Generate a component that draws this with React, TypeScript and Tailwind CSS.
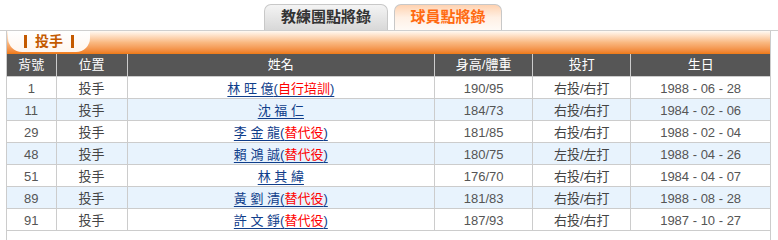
const font = "font-['Liberation_Sans','Noto_Sans_CJK_TC',sans-serif]";

interface Player {
  no: string;
  name: string;
  note?: string;
  body: string;
  hand: string;
  birth: string;
}

const players: Player[] = [
  { no: '1', name: '林 旺 億', note: '自行培訓', body: '190/95', hand: '右投/右打', birth: '1988 - 06 - 28' },
  { no: '11', name: '沈 福 仁', body: '184/73', hand: '右投/右打', birth: '1984 - 02 - 06' },
  { no: '29', name: '李 金 龍', note: '替代役', body: '181/85', hand: '右投/右打', birth: '1988 - 02 - 04' },
  { no: '48', name: '賴 鴻 誠', note: '替代役', body: '180/75', hand: '左投/左打', birth: '1988 - 04 - 26' },
  { no: '51', name: '林 其 緯', body: '176/70', hand: '右投/右打', birth: '1984 - 04 - 07' },
  { no: '89', name: '黃 劉 清', note: '替代役', body: '181/83', hand: '右投/右打', birth: '1988 - 08 - 28' },
  { no: '91', name: '許 文 錚', note: '替代役', body: '187/93', hand: '右投/右打', birth: '1987 - 10 - 27' },
];

const cols = ['背號', '位置', '姓名', '身高/體重', '投打', '生日'];
const widths = ['w-[49px]', 'w-[71px]', 'w-[307px]', 'w-[98px]', 'w-[98px]', 'w-[139px]'];

const cell = 'h-[22px] border border-[#cccccc] p-0 pt-[3px] text-center align-top leading-[17px]';

export default function App() {
  return (
    <div className={`${font} w-[778px] h-[240px] overflow-hidden bg-white text-[13px] text-[#444]`}>
      {/* Tabs */}
      <div className="flex h-[31px] items-end gap-[6px] border-b border-[#cfcfcf] pl-[264px]">
        <div className="flex h-[26px] w-[124px] items-center justify-center rounded-t-[7px] border border-b-0 border-[#c8c8c8] bg-gradient-to-b from-[#f4f4f4] to-[#d8d8d8] text-[15px] font-bold text-[#333]">
          教練團點將錄
        </div>
        <div className="flex h-[26px] w-[108px] items-center justify-center rounded-t-[7px] border border-b-0 border-[#c8c8c8] bg-gradient-to-b from-[#ffd2b0] via-[#fff0e4] to-[#fffaf6] text-[15px] font-bold text-[#ff6a10]">
          球員點將錄
        </div>
      </div>

      {/* Box */}
      <div className="ml-[6px] w-[765px] border border-t-0 border-[#cccccc]">
        <div className="h-[23px] bg-gradient-to-b from-[#fffaf4] via-[#f9b880] to-[#ee7a12]">
          <div className="ml-[1px] flex h-[21px] w-[82px] items-center justify-center gap-[8px] rounded-b-[14px] bg-gradient-to-b from-white to-[#fff6ee] text-[14px] font-bold text-[#c45a00]">
            <span className="h-[13px] w-[3px] bg-[#c45a00]" />
            投手
            <span className="h-[13px] w-[3px] bg-[#c45a00]" />
          </div>
        </div>
        <table className="w-[763px] table-fixed border-collapse">
          <thead>
            <tr className="bg-[#565656] text-white">
              {cols.map((c, i) => (
                <th key={c} className={`${widths[i]} h-[22px] border-x border-[#cccccc] p-0 text-center text-[13px] font-normal leading-[21px] first:border-l-0 last:border-r-0`}>
                  {c}
                </th>
              ))}
            </tr>
          </thead>
          <tbody>
            {players.map((p, i) => (
              <tr key={p.no} className={i % 2 === 1 ? 'bg-[#e8f3fd]' : 'bg-white'}>
                <td className={`${cell} border-l-0 text-[#555]`}>{p.no}</td>
                <td className={cell}>投手</td>
                <td className={cell}>
                  <span className="text-[#0f3d8a] underline underline-offset-[3px]">
                    {p.name}
                    {p.note && (
                      <>
                        (<span className="text-[#ff0000]">{p.note}</span>)
                      </>
                    )}
                  </span>
                </td>
                <td className={`${cell} text-[#555]`}>{p.body}</td>
                <td className={cell}>{p.hand}</td>
                <td className={`${cell} border-r-0 text-[#555]`}>{p.birth}</td>
              </tr>
            ))}
          </tbody>
        </table>
        <div className="h-[20px]" />
      </div>
    </div>
  );
}
